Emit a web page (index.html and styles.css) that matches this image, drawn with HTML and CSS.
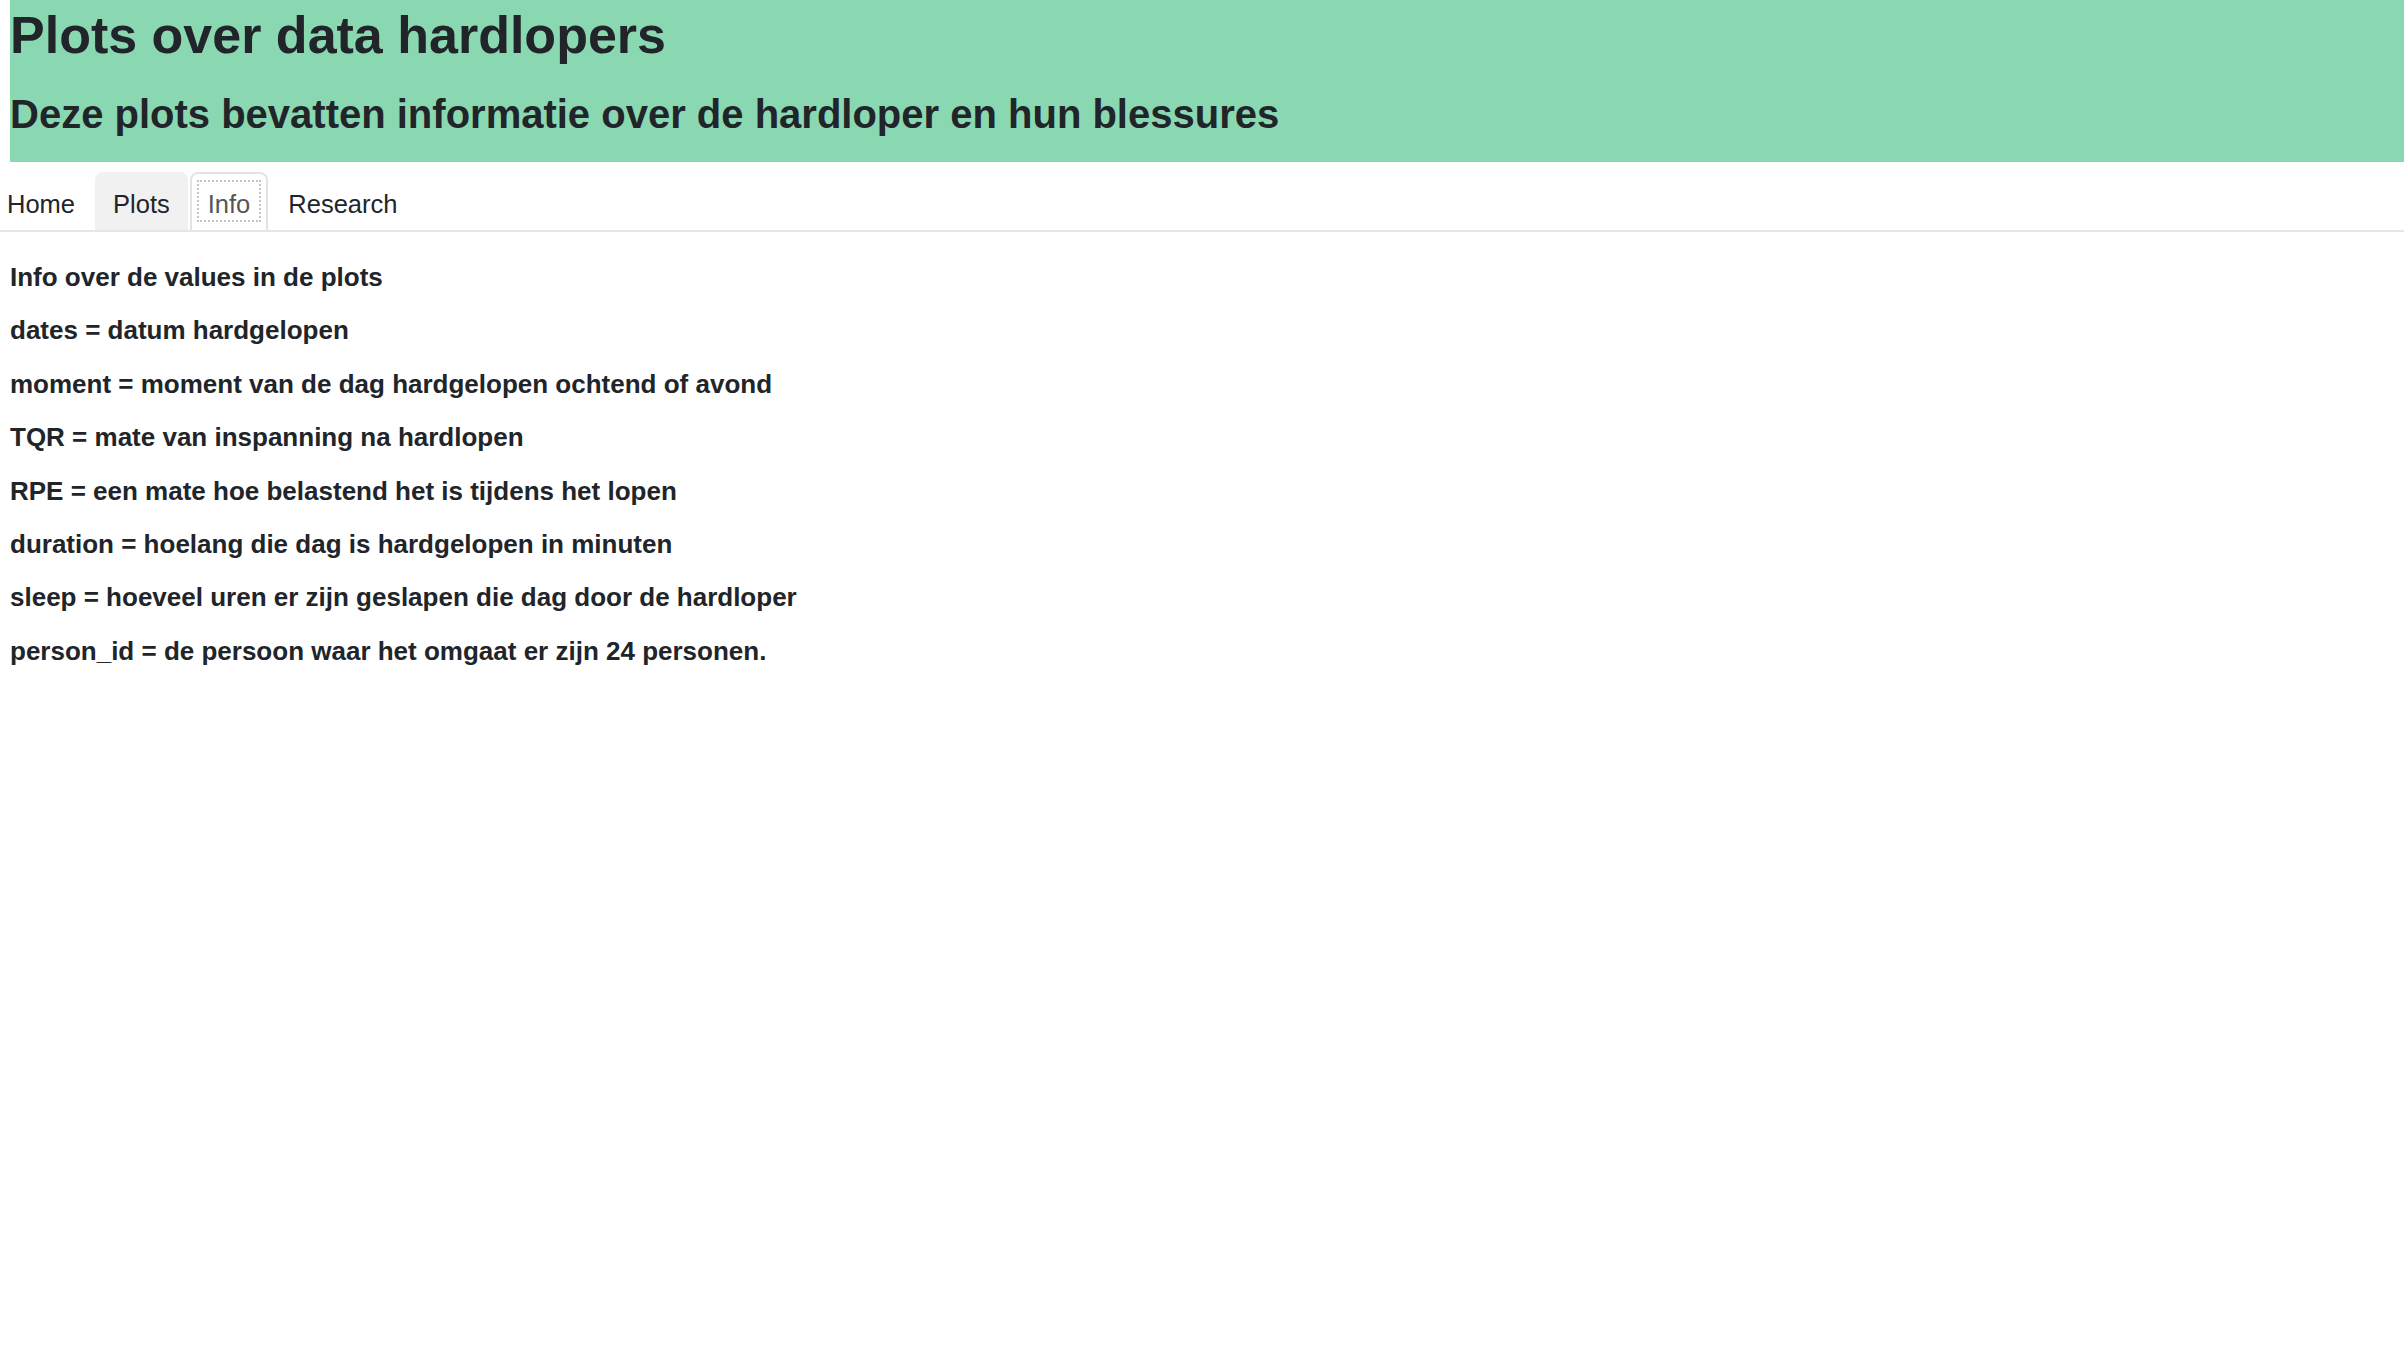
FILE: index.html
```html
<!DOCTYPE html>
<html lang="nl">
<head>
<meta charset="utf-8">
<title>Plots over data hardlopers</title>
<link rel="stylesheet" href="styles.css">
</head>
<body>
  <header class="banner">
    <h1 class="title">Plots over data hardlopers</h1>
    <h2 class="subtitle">Deze plots bevatten informatie over de hardloper en hun blessures</h2>
  </header>
  <nav class="tabs">
    <ul class="tab-list">
      <li class="tab"><a class="tab-link">Home</a></li>
      <li class="tab tab-hover"><a class="tab-link">Plots</a></li>
      <li class="tab tab-active"><a class="tab-link tab-focus">Info</a></li>
      <li class="tab"><a class="tab-link">Research</a></li>
    </ul>
  </nav>
  <main class="content">
    <p class="info">Info over de values in de plots</p>
    <p class="info">dates = datum hardgelopen</p>
    <p class="info">moment = moment van de dag hardgelopen ochtend of avond</p>
    <p class="info">TQR = mate van inspanning na hardlopen</p>
    <p class="info">RPE = een mate hoe belastend het is tijdens het lopen</p>
    <p class="info">duration = hoelang die dag is hardgelopen in minuten</p>
    <p class="info">sleep = hoeveel uren er zijn geslapen die dag door de hardloper</p>
    <p class="info">person_id = de persoon waar het omgaat er zijn 24 personen.</p>
  </main>
</body>
</html>
```

FILE: styles.css
```css
html, body {
  margin: 0;
  padding: 0;
  background: #ffffff;
}

body {
  font-family: "Liberation Sans", Arial, Helvetica, sans-serif;
  color: #212529;
  font-size: 26px;
  overflow: hidden;
}

.banner {
  margin-left: 10px;
  background: #8ad8b1;
  padding: 4px 0 24px 0;
}

.title {
  margin: 0;
  font-size: 52px;
  line-height: 62px;
  font-weight: bold;
}

.subtitle {
  margin: 24px 0 0 0;
  font-size: 40px;
  line-height: 48px;
  font-weight: bold;
}

.tabs {
  margin-top: 10px;
  border-bottom: 2px solid #e6e6e6;
}

.tab-list {
  list-style: none;
  margin: 0 0 0 -11px;
  padding: 0;
  display: flex;
  gap: 2px;
}

.tab {
  padding: 6px 5px 8px 5px;
  border: 2px solid transparent;
  border-bottom: 0;
  border-radius: 8px 8px 0 0;
  font-size: 25.5px;
}

.tab-hover {
  background: #f1f1f1;
}

.tab-active {
  border-color: #e3e3e3;
  background: #ffffff;
}

.tab-link {
  display: block;
  padding: 8px 11px 2px 11px;
  line-height: 32px;
  color: #212529;
}

.tab-focus {
  color: #555555;
  outline: 2px dotted #c4c4c4;
  outline-offset: -2px;
}

.content {
  padding: 30px 0 0 10px;
}

.info {
  margin: 0 0 22px 0;
  font-weight: bold;
  line-height: 31.4px;
}
```
